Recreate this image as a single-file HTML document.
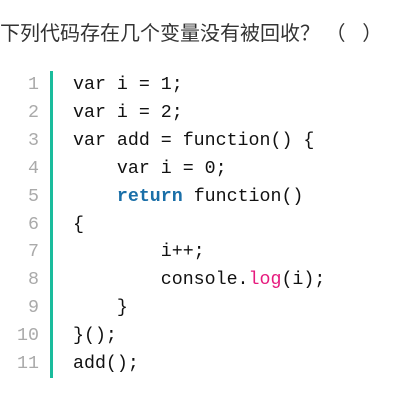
<!DOCTYPE html>
<html><head><meta charset="utf-8"><style>
body{margin:0;width:416px;height:410px;background:#fff;overflow:hidden;font-family:"Liberation Sans","Noto Sans CJK SC",sans-serif}
.t{position:absolute;left:0;top:20px;font-size:20px;color:#333;white-space:pre;line-height:28px}
.bar{position:absolute;left:50px;top:71px;width:3px;height:307px;background:#1abc9c}
.ln,.c{position:absolute;top:72px;font-family:"Liberation Mono",monospace;font-size:18.3px;line-height:27.9px;white-space:pre;margin:0}
.ln{left:0;width:39px;text-align:right;color:#aaa}
.c{left:73px;color:#111}
.k{color:#1a6fa8;font-weight:bold}.p{color:#e6197d}
</style></head><body>
<div class="t">下列代码存在几个变量没有被回收？ （&nbsp;&nbsp;&nbsp;）</div>
<div class="bar"></div>
<div class="ln">1
2
3
4
5
6
7
8
9
10
11</div>
<div class="c">var i = 1;
var i = 2;
var add = function() {
    var i = 0;
    <span class="k">return</span> function()
{
        i++;
        console.<span class="p">log</span>(i);
    }
}();
add();</div>
</body></html>
